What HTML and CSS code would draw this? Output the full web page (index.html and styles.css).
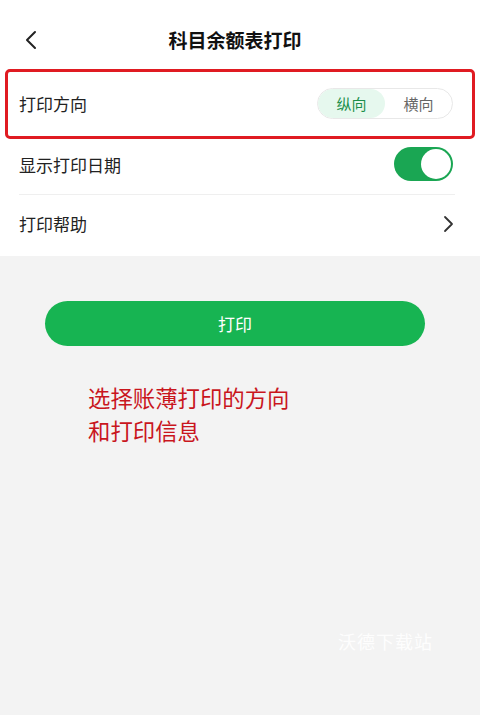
FILE: index.html
```html
<!DOCTYPE html>
<html lang="zh">
<head>
<meta charset="utf-8">
<link rel="stylesheet" href="styles.css">
</head>
<body>
<div class="top">
  <header class="header">
    <svg class="back" width="14" height="20" viewBox="0 0 14 20"><path d="M11 2 L3 10 L11 18" fill="none" stroke="#222" stroke-width="2" stroke-linecap="round" stroke-linejoin="round"/></svg>
    <h1 class="title">科目余额表打印</h1>
  </header>
  <div class="highlight">
    <div class="row row-first">
      <span class="label">打印方向</span>
      <div class="seg">
        <span class="seg-item seg-on">纵向</span>
        <span class="seg-item">横向</span>
      </div>
    </div>
  </div>
  <div class="row row-date">
    <span class="label">显示打印日期</span>
    <div class="toggle"><span class="knob"></span></div>
  </div>
  <div class="divider"></div>
  <div class="row row-help">
    <span class="label">打印帮助</span>
    <svg class="chev" width="12" height="18" viewBox="0 0 12 18"><path d="M3 2 L10 9 L3 16" fill="none" stroke="#333" stroke-width="1.8" stroke-linecap="round" stroke-linejoin="round"/></svg>
  </div>
</div>
<div class="bottom">
  <button class="print-btn">打印</button>
  <p class="note">选择账薄打印的方向<br>和打印信息</p>
  <div class="watermark">沃德下载站</div>
</div>
</body>
</html>
```
FILE: styles.css
```css
html, body {
  margin: 0;
  padding: 0;
}
body {
  width: 480px;
  height: 715px;
  background: #f3f3f3;
  font-family: "Noto Sans CJK SC", "Noto Sans", sans-serif;
  color: #222;
  overflow: hidden;
}
.top {
  background: #fff;
  height: 256px;
}
.header {
  height: 58px;
  padding-top: 10px;
  display: flex;
  align-items: center;
  justify-content: center;
  position: relative;
}
.back {
  position: absolute;
  left: 24px;
  top: 30px;
}
.title {
  margin: 0;
  font-size: 19px;
  font-weight: 700;
  color: #111;
  padding-right: 10px;
}
.highlight {
  margin: 1px 5px 0;
  height: 64px;
  border: 3px solid #e01b22;
  border-radius: 5px;
  display: flex;
  align-items: center;
}
.row {
  display: flex;
  align-items: center;
  justify-content: space-between;
  box-sizing: border-box;
}
.row-first {
  width: 100%;
  padding: 0 19px 2px 11px;
}
.label {
  font-size: 17px;
  color: #222;
}
.seg {
  display: flex;
  height: 29px;
  border: 1px solid #e8e8e8;
  border-radius: 16px;
  overflow: hidden;
  width: 134px;
}
.seg-item {
  flex: 1;
  display: flex;
  align-items: center;
  justify-content: center;
  font-size: 15px;
  color: #666;
  border-radius: 16px;
}
.seg-on {
  background: #e6f8ee;
  color: #1c8f4a;
}
.row-date {
  height: 55px;
  padding: 0 27px 5px 19px;
}
.toggle {
  width: 59px;
  height: 34px;
  border-radius: 17px;
  background: #1aa653;
  display: flex;
  align-items: center;
  justify-content: flex-end;
  padding-right: 2px;
  box-sizing: border-box;
}
.knob {
  width: 30px;
  height: 30px;
  border-radius: 50%;
  background: #fff;
}
.divider {
  height: 1px;
  background: #efefef;
  margin: 0 25px 0 19px;
}
.row-help {
  height: 60px;
  padding: 0 26px 3px 19px;
}
.bottom {
  position: relative;
  height: 459px;
  padding-top: 45px;
  box-sizing: border-box;
}
.print-btn {
  display: block;
  margin-left: 45px;
  width: 380px;
  height: 45px;
  border: none;
  border-radius: 23px;
  background: #17b452;
  color: #fff;
  font-family: "Noto Sans CJK SC", sans-serif;
  font-size: 17px;
  padding: 0;
}
.note {
  margin: 35px 0 0 88px;
  font-size: 22.4px;
  line-height: 33px;
  color: #c9161d;
}
.watermark {
  position: absolute;
  left: 338px;
  top: 372px;
  font-size: 18px;
  color: rgba(255,255,255,0.9);
  letter-spacing: 1px;
}
```
